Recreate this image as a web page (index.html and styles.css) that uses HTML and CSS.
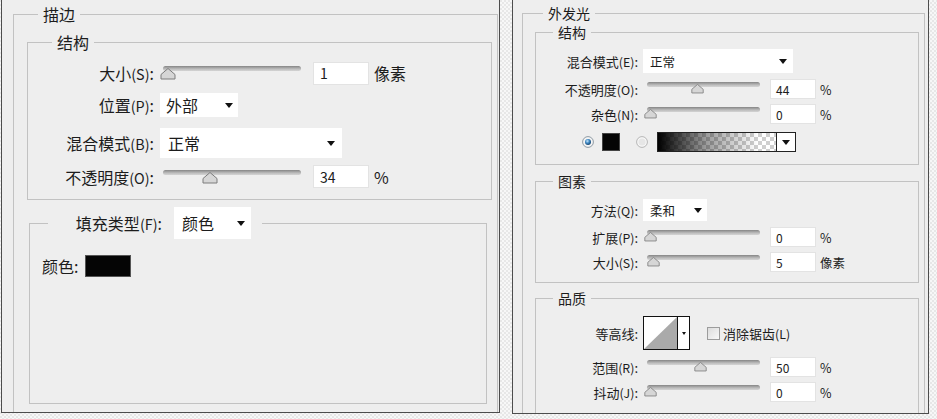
FILE: index.html
```html
<!DOCTYPE html>
<html lang="zh-CN">
<head>
    <meta charset="UTF-8">
    <title>图层样式</title>
    <link rel="stylesheet" href="styles.css">
</head>
<body>
<div class="desk">
    <div class="win win-left">
        <fieldset class="grp stroke">
            <legend class="grp-title">描边</legend>
            <fieldset class="grp l-struct">
                <legend class="grp-title">结构</legend>
                <div class="row l-r1">
                    <span class="lbl">大小<span class="key">(S)</span>:</span>
                    <div class="slider"><div class="track"></div><svg class="thumb" style="left:0px" viewBox="0 0 16 13"><path d="M1 12V7.5L8 1.5L15 7.5V12Z"/></svg></div>
                    <div class="num">1</div>
                    <span class="unit">像素</span>
                </div>
                <div class="row l-r2">
                    <span class="lbl">位置<span class="key">(P)</span>:</span>
                    <div class="select sel-pos"><span>外部</span><i class="caret"></i></div>
                </div>
                <div class="row l-r3">
                    <span class="lbl">混合模式<span class="key">(B)</span>:</span>
                    <div class="select sel-blend"><span>正常</span><i class="caret"></i></div>
                </div>
                <div class="row l-r4">
                    <span class="lbl">不透明度<span class="key">(O)</span>:</span>
                    <div class="slider"><div class="track"></div><svg class="thumb" style="left:42px" viewBox="0 0 16 13"><path d="M1 12V7.5L8 1.5L15 7.5V12Z"/></svg></div>
                    <div class="num">34</div>
                    <span class="unit">%</span>
                </div>
            </fieldset>
            <fieldset class="grp fill">
                <legend class="fill-title">
                    <span class="fill-lbl">填充类型<span class="key">(F)</span>:</span>
                    <span class="select sel-fill"><span>颜色</span><i class="caret"></i></span>
                </legend>
                <div class="row color-row">
                    <span>颜色:</span>
                    <span class="swatch"></span>
                </div>
            </fieldset>
        </fieldset>
    </div>

    <div class="win win-right">
        <fieldset class="grp glow">
            <legend class="grp-title">外发光</legend>
            <fieldset class="grp r-struct">
                <legend class="grp-title">结构</legend>
                <div class="row r-r1">
                    <span class="lbl">混合模式<span class="key">(E)</span>:</span>
                    <div class="select sel-rblend"><span>正常</span><i class="caret"></i></div>
                </div>
                <div class="row r-r2">
                    <span class="lbl">不透明度<span class="key">(O)</span>:</span>
                    <div class="slider"><div class="track"></div><svg class="thumb" style="left:48px" viewBox="0 0 16 13"><path d="M1 12V7.5L8 1.5L15 7.5V12Z"/></svg></div>
                    <div class="num">44</div>
                    <span class="unit">%</span>
                </div>
                <div class="row r-r3">
                    <span class="lbl">杂色<span class="key">(N)</span>:</span>
                    <div class="slider"><div class="track"></div><svg class="thumb" style="left:1px" viewBox="0 0 16 13"><path d="M1 12V7.5L8 1.5L15 7.5V12Z"/></svg></div>
                    <div class="num">0</div>
                    <span class="unit">%</span>
                </div>
                <div class="row r-r4">
                    <svg class="radio" viewBox="0 0 12 12">
                        <defs>
                            <radialGradient id="rOn" cx="0.4" cy="0.35" r="0.6">
                                <stop offset="0" stop-color="#c9e6fa"/>
                                <stop offset="0.55" stop-color="#3f89c4"/>
                                <stop offset="1" stop-color="#1d4f7d"/>
                            </radialGradient>
                        </defs>
                        <circle cx="6" cy="6" r="5.4" fill="#f4f4f4" stroke="#8e9aa4"/>
                        <circle cx="6" cy="6" r="3" fill="url(#rOn)"/>
                    </svg>
                    <span class="chip"></span>
                    <svg class="radio radio-off" viewBox="0 0 12 12">
                        <circle cx="6" cy="6" r="5.4" fill="#f7f7f7" stroke="#b5b5b5"/>
                        <circle cx="6" cy="6" r="3.6" fill="#e6e6e6"/>
                    </svg>
                    <div class="grad-pick"><span class="grad"></span><span class="grad-btn"><i class="caret"></i></span></div>
                </div>
            </fieldset>
            <fieldset class="grp elem">
                <legend class="grp-title">图素</legend>
                <div class="row e-r1">
                    <span class="lbl">方法<span class="key">(Q)</span>:</span>
                    <div class="select sel-method"><span>柔和</span><i class="caret"></i></div>
                </div>
                <div class="row e-r2">
                    <span class="lbl">扩展<span class="key">(P)</span>:</span>
                    <div class="slider"><div class="track"></div><svg class="thumb" style="left:1px" viewBox="0 0 16 13"><path d="M1 12V7.5L8 1.5L15 7.5V12Z"/></svg></div>
                    <div class="num">0</div>
                    <span class="unit">%</span>
                </div>
                <div class="row e-r3">
                    <span class="lbl">大小<span class="key">(S)</span>:</span>
                    <div class="slider"><div class="track"></div><svg class="thumb" style="left:4px" viewBox="0 0 16 13"><path d="M1 12V7.5L8 1.5L15 7.5V12Z"/></svg></div>
                    <div class="num">5</div>
                    <span class="unit">像素</span>
                </div>
            </fieldset>
            <fieldset class="grp quality">
                <legend class="grp-title">品质</legend>
                <div class="row q-r1">
                    <span class="lbl">等高线:</span>
                    <div class="contour">
                        <svg class="curve" viewBox="0 0 33 32" preserveAspectRatio="none"><path d="M0 32L33 0V32Z" fill="#aaaaaa"/></svg>
                        <span class="contour-btn"><i class="caret small"></i></span>
                    </div>
                    <span class="check"></span>
                    <span class="check-lbl">消除锯齿<span class="key">(L)</span></span>
                </div>
                <div class="row q-r2">
                    <span class="lbl">范围<span class="key">(R)</span>:</span>
                    <div class="slider"><div class="track"></div><svg class="thumb" style="left:51px" viewBox="0 0 16 13"><path d="M1 12V7.5L8 1.5L15 7.5V12Z"/></svg></div>
                    <div class="num">50</div>
                    <span class="unit">%</span>
                </div>
                <div class="row q-r3">
                    <span class="lbl">抖动<span class="key">(J)</span>:</span>
                    <div class="slider"><div class="track"></div><svg class="thumb" style="left:1px" viewBox="0 0 16 13"><path d="M1 12V7.5L8 1.5L15 7.5V12Z"/></svg></div>
                    <div class="num">0</div>
                    <span class="unit">%</span>
                </div>
            </fieldset>
        </fieldset>
    </div>
</div>
</body>
</html>
```

FILE: styles.css
```css
* {
    box-sizing: border-box;
}
body {
    margin: 0;
    font-family: "Noto Sans CJK SC", sans-serif;
    color: #1c1c1c;
    background: #f3f3f3;
}
.desk {
    display: flex;
    align-items: flex-start;
    height: 419px;
    padding-left: 1px;
    background: repeating-conic-gradient(#f7f7f7 0 25%, #e7e7e7 0 50%) 0 0 / 4px 4px;
}
.win {
    background: #eeeeee;
    border: 1px solid #4d4d4d;
    border-top: none;
    overflow: hidden;
}
.win-left {
    width: 499px;
    height: 413px;
    font-size: 16px;
}
.win-right {
    width: 417px;
    height: 414px;
    margin-left: 12px;
    font-size: 12.5px;
}

/* group boxes */
.grp {
    margin: 0;
    padding: 0;
    min-width: 0;
    border: 1px solid #c2c2c2;
}
.grp-title {
    padding: 0 5px;
    line-height: 20px;
}
.win-right .grp-title {
    line-height: 18px;
    font-size: 14px;
}

.row {
    display: flex;
    align-items: center;
}
.lbl {
    flex: none;
    text-align: right;
    white-space: nowrap;
}
.key {
    font-size: 0.9em;
}

/* left: stroke */
.stroke {
    margin: 4px 1px 0 11px;
    padding-bottom: 30px;
}
.stroke > .grp-title {
    margin-left: 24px;
}
.l-struct {
    margin: 8px 5px 0 13px;
    padding-bottom: 11px;
}
.l-struct > .grp-title {
    margin-left: 24px;
}
.win-left .lbl {
    width: 126px;
    margin-right: 6px;
}
.l-r1 { margin-top: 9px; height: 24px; }
.l-r2 { margin-top: 8px; height: 24px; }
.l-r3 { margin-top: 11px; height: 30px; }
.l-r4 { margin-top: 7px; height: 23px; }

.slider {
    position: relative;
    flex: none;
    height: 20px;
}
.track {
    position: absolute;
    top: 3px;
    height: 5px;
    border-radius: 3px;
    background: linear-gradient(#858585, #bdbdbd 60%, #d4d4d4);
}
.thumb {
    position: absolute;
    top: 4px;
    fill: #d6d6d6;
    stroke: #7c7c7c;
    stroke-width: 1;
    stroke-linejoin: round;
}
.win-left .slider {
    width: 142px;
    margin-right: 11px;
}
.win-left .track {
    left: 3px;
    right: 1px;
}
.win-left .thumb {
    width: 16px;
    height: 13px;
}
.num {
    flex: none;
    background: #ffffff;
    border: 1px solid #e3e3e3;
    display: flex;
    align-items: center;
}
.win-left .num {
    width: 56px;
    height: 23px;
    padding-left: 6px;
    font-size: 14px;
}
.win-left .unit {
    margin-left: 5px;
}

.select {
    flex: none;
    background: #ffffff;
    display: flex;
    align-items: center;
    justify-content: space-between;
}
.caret {
    width: 0;
    height: 0;
    border-left: 4px solid transparent;
    border-right: 4px solid transparent;
    border-top: 5px solid #111111;
}
.caret.small {
    border-left-width: 2.5px;
    border-right-width: 2.5px;
    border-top-width: 3px;
}
.sel-pos {
    width: 78px;
    height: 24px;
    padding: 0 5px 0 6px;
}
.sel-blend {
    width: 182px;
    height: 30px;
    padding: 0 7px 0 8px;
}

.fill {
    margin: 7px 10px 0 15px;
    padding: 0 0 126px 12px;
}
.fill-title {
    margin-left: 6px;
    padding: 0 11px 0 0;
    display: flex;
    align-items: center;
}
.fill-lbl {
    width: 114px;
    margin-right: 12px;
    text-align: right;
}
.sel-fill {
    width: 77px;
    height: 32px;
    padding: 0 6px 0 8px;
}
.color-row {
    margin-top: 16px;
    height: 22px;
}
.swatch {
    width: 46px;
    height: 22px;
    margin-left: 7px;
    background: #050505;
    border: 1px solid #555555;
}

/* right: outer glow */
.glow {
    margin: 4px 3px 0 9px;
    padding-bottom: 40px;
}
.glow > .grp-title {
    margin-left: 20px;
}
.r-struct, .elem, .quality {
    margin-left: 12px;
    margin-right: 5px;
}
.r-struct > .grp-title, .elem > .grp-title, .quality > .grp-title {
    margin-left: 17px;
}
.r-struct {
    margin-top: 1px;
    padding-bottom: 12px;
}
.elem {
    margin-top: 7px;
    padding-bottom: 10px;
}
.quality {
    margin-top: 6px;
    padding-bottom: 30px;
}
.win-right .lbl {
    width: 102px;
    margin-right: 5px;
    font-size: 13px;
}
.win-right .key {
    font-size: 0.95em;
}
.win-right .slider {
    width: 118px;
    margin-right: 9px;
}
.win-right .track {
    left: 4px;
    right: 1px;
}
.win-right .thumb {
    width: 13px;
    height: 11px;
}
.win-right .num {
    width: 46px;
    height: 20px;
    padding-left: 5px;
    font-size: 12px;
}
.win-right .unit {
    margin-left: 4px;
}
.r-r1 { margin-top: 8px; height: 24px; }
.r-r2 { margin-top: 6px; height: 20px; }
.r-r3 { margin-top: 5px; height: 20px; }
.r-r4 { margin-top: 8px; height: 20px; padding-left: 46px; }
.e-r1 { margin-top: 9px; height: 22px; }
.e-r2 { margin-top: 6px; height: 20px; }
.e-r3 { margin-top: 5px; height: 20px; }
.q-r1 { margin-top: 9px; height: 34px; }
.q-r2 { margin-top: 6px; height: 22px; }
.q-r3 { margin-top: 4px; height: 20px; }

.sel-rblend {
    width: 150px;
    height: 24px;
    padding: 0 6px 0 7px;
}
.sel-method {
    width: 64px;
    height: 22px;
    padding: 0 5px 0 7px;
}

.radio {
    flex: none;
    width: 12px;
    height: 12px;
}
.chip {
    width: 18px;
    height: 18px;
    margin-left: 8px;
    background: #050505;
    border: 1px solid #444444;
}
.radio-off {
    margin-left: 16px;
}
.grad-pick {
    display: flex;
    width: 139px;
    height: 20px;
    margin-left: 9px;
    border: 1px solid #222222;
}
.grad {
    flex: 1;
    background:
        linear-gradient(90deg, #000000, rgba(0, 0, 0, 0.4) 40%, rgba(0, 0, 0, 0) 85%),
        repeating-conic-gradient(#cfcfcf 0 25%, #ffffff 0 50%) 0 0 / 8px 8px;
}
.grad-btn {
    width: 19px;
    border-left: 1px solid #222222;
    background: #ffffff;
    display: flex;
    align-items: center;
    justify-content: center;
}

.contour {
    display: flex;
    width: 47px;
    height: 34px;
    border: 1px solid #111111;
    background: #ffffff;
}
.curve {
    width: 33px;
    height: 32px;
}
.contour-btn {
    flex: 1;
    border-left: 1px solid #111111;
    display: flex;
    align-items: center;
    justify-content: center;
}
.check {
    width: 13px;
    height: 13px;
    margin-left: 17px;
    border: 1px solid #9c9c9c;
    background: linear-gradient(135deg, #dcdcdc, #f8f8f8);
}
.check-lbl {
    margin-left: 3px;
    font-size: 13px;
}
```
